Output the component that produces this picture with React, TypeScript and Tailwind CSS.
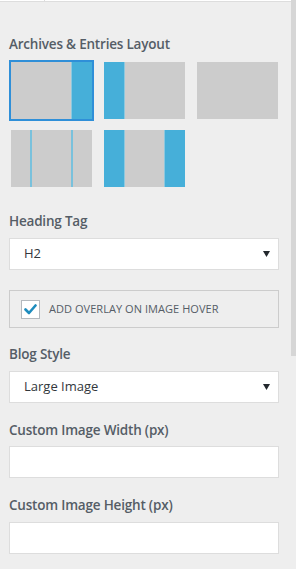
import React from "react";

const font = { fontFamily: '"Open Sans", "Noto Sans", sans-serif' };

function Label({ children, className = "" }: { children: React.ReactNode; className?: string }) {
  return (
    <div className={"text-[13.5px] leading-[20px] font-semibold tracking-[-0.2px] text-[#555d66] " + className}>{children}</div>
  );
}

function Select({ value, className = "" }: { value: string; className?: string }) {
  return (
    <div className={"h-[32px] w-[270px] bg-white border border-[#dddddd] flex items-center justify-between pl-[14px] pr-[8px] " + className}>
      <span className="text-[13px] text-[#32373c]">{value}</span>
      <svg width="7" height="6" viewBox="0 0 7 6"><path d="M0 0H7L3.5 6Z" fill="#23282d" /></svg>
    </div>
  );
}

function Input({ className = "" }: { className?: string }) {
  return <div className={"h-[32px] w-[270px] bg-white border border-[#dddddd] " + className} />;
}

function Strip({ side }: { side: "l" | "r" }) {
  return (
    <div className={"w-[21px] h-full bg-[#46afd9] " + (side === "r" ? "border-l border-[#8cc8df]" : "border-r border-[#8cc8df]")} />
  );
}

export default function App() {
  return (
    <div className="relative w-[296px] h-[569px] overflow-hidden bg-[#eeeeee]" style={font}>
      <div className="h-[2px] bg-white border-b border-[#dddddd] relative">
        <div className="absolute left-[44px] top-0 w-px h-[2px] bg-[#dddddd]" />
      </div>
      <div className="pl-[9px] pr-[17px]">
        <Label className="mt-[32px]">Archives &amp; Entries Layout</Label>
        <div className="mt-[8px] pl-[2px] flex flex-col gap-[11px]">
          <div className="flex gap-[12px]">
            <div className="w-[81px] h-[57px] bg-[#cccccc] flex justify-end ring-2 ring-[#2f8fd8]">
              <Strip side="r" />
            </div>
            <div className="w-[81px] h-[57px] bg-[#cccccc] flex">
              <Strip side="l" />
            </div>
            <div className="w-[81px] h-[57px] bg-[#cccccc]" />
          </div>
          <div className="flex gap-[12px]">
            <div className="w-[81px] h-[57px] bg-[#cccccc] flex">
              <div className="w-[19px]" />
              <div className="w-[2px] h-full bg-[#79c1dc]" />
              <div className="w-[39px]" />
              <div className="w-[2px] h-full bg-[#79c1dc]" />
            </div>
            <div className="w-[81px] h-[57px] bg-[#cccccc] flex justify-between">
              <Strip side="l" />
              <Strip side="r" />
            </div>
          </div>
        </div>

        <Label className="mt-[24px]">Heading Tag</Label>
        <Select value="H2" className="mt-[7px]" />

        <div className="mt-[20px] w-[270px] h-[38px] border border-[#cccccc] flex items-center pl-[11px]">
          <div className="w-[19px] h-[19px] bg-white border border-[#b4b9be] flex items-center justify-center">
            <svg width="13" height="11" viewBox="0 0 13 11">
              <path d="M1.5 5.5 L5 9 L11.5 1.5" stroke="#1e8cbe" strokeWidth="2.6" fill="none" strokeLinecap="round" strokeLinejoin="round" />
            </svg>
          </div>
          <span className="ml-[9px] text-[11px] text-[#555d66] tracking-[0.05px]">ADD OVERLAY ON IMAGE HOVER</span>
        </div>

        <Label className="mt-[16px]">Blog Style</Label>
        <Select value="Large Image" className="mt-[7px]" />

        <Label className="mt-[17px]">Custom Image Width (px)</Label>
        <Input className="mt-[6px]" />

        <Label className="mt-[17px]">Custom Image Height (px)</Label>
        <Input className="mt-[7px]" />
      </div>
      <div className="absolute right-0 top-0 w-[5px] h-[356px] bg-[#d6d6d6]" />
    </div>
  );
}
